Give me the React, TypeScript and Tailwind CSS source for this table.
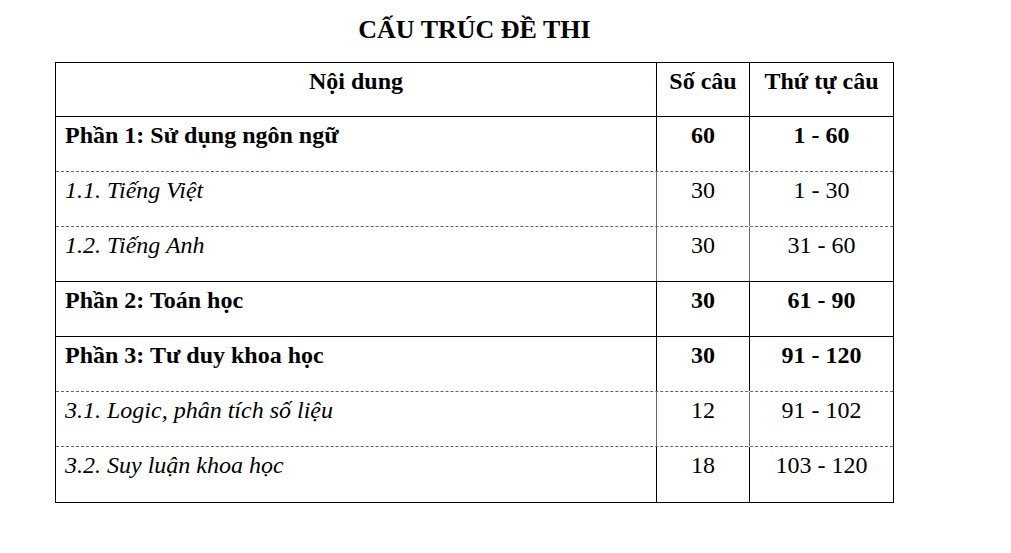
import React from "react";

type Row = {
  label: string;
  count: string;
  range: string;
  bold: boolean;
  bottom: "solid" | "dashed" | "none";
  grayV: boolean;
};

const rows: Row[] = [
  { label: "Phần 1: Sử dụng ngôn ngữ", count: "60", range: "1 - 60", bold: true, bottom: "dashed", grayV: false },
  { label: "1.1. Tiếng Việt", count: "30", range: "1 - 30", bold: false, bottom: "dashed", grayV: true },
  { label: "1.2. Tiếng Anh", count: "30", range: "31 - 60", bold: false, bottom: "solid", grayV: true },
  { label: "Phần 2: Toán học", count: "30", range: "61 - 90", bold: true, bottom: "solid", grayV: false },
  { label: "Phần 3: Tư duy khoa học", count: "30", range: "91 - 120", bold: true, bottom: "dashed", grayV: false },
  { label: "3.1. Logic, phân tích số liệu", count: "12", range: "91 - 102", bold: false, bottom: "dashed", grayV: true },
  { label: "3.2. Suy luận khoa học", count: "18", range: "103 - 120", bold: false, bottom: "none", grayV: false },
];

export default function App() {
  return (
    <div
      className="w-[1011px] h-[553px] bg-white text-black pl-[55px] pt-[15px]"
      style={{ fontFamily: '"Liberation Serif", "Times New Roman", serif' }}
    >
      <div className="w-[839px] text-center text-[26px] font-bold leading-[29px]">
        CẤU TRÚC ĐỀ THI
      </div>
      <div className="mt-[18px] w-[839px] border border-black text-[24px] leading-[27px]">
        <div className="flex h-[54px] border-b border-black font-bold">
          <div className="w-[601px] border-r border-black text-center pt-[5px]">Nội dung</div>
          <div className="w-[93px] border-r border-black text-center pt-[5px]">Số câu</div>
          <div className="flex-1 text-center pt-[5px]">Thứ tự câu</div>
        </div>
        {rows.map((r, i) => {
          const rowBorder =
            r.bottom === "solid"
              ? "border-b border-black"
              : r.bottom === "dashed"
              ? "border-b border-dashed border-[#666]"
              : "";
          const vcol = r.grayV ? "border-[#666]" : "border-black";
          return (
            <div
              key={i}
              className={`flex h-[55px] ${rowBorder} ${r.bold ? "font-bold" : ""}`}
            >
              <div className={`w-[601px] border-r ${vcol} pl-[9px] pt-[5px] ${r.bold ? "" : "italic"}`}>
                {r.label}
              </div>
              <div className={`w-[93px] border-r ${vcol} text-center pt-[5px]`}>{r.count}</div>
              <div className="flex-1 text-center pt-[5px]">{r.range}</div>
            </div>
          );
        })}
      </div>
    </div>
  );
}
